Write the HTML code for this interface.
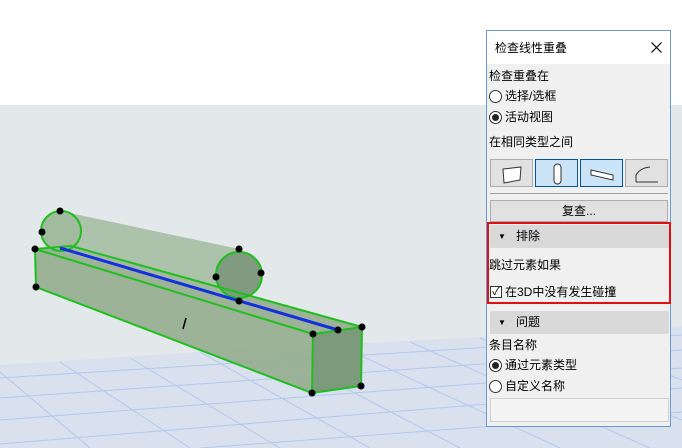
<!DOCTYPE html>
<html><head><meta charset="utf-8"><style>
*{margin:0;padding:0;box-sizing:border-box}
body{width:682px;height:448px;overflow:hidden;position:relative;background:#fff;font-family:"Liberation Sans","Noto Sans CJK SC",sans-serif;font-size:12px;color:#000}
.t{position:absolute;white-space:nowrap;line-height:14px}
.panel{position:absolute;left:486px;top:30px;width:185px;height:397px;background:#f0f0f0;border:1px solid #6b9ad3}
.radio{position:absolute;width:13px;height:13px;border:1px solid #333;border-radius:50%;background:#fff}
.radio.on::after{content:"";position:absolute;left:2px;top:2px;width:7px;height:7px;border-radius:50%;background:#222}
.btn{position:absolute;height:28px;width:43px;border:1px solid #adadad;background:#e1e1e1}
.btn.sel{background:#cce4f7;border-color:#005499}
.hdr{position:absolute;left:3px;width:179px;height:23px;background:#d9d9d9;border-radius:2px}
</style></head><body>
<svg width="682" height="448" style="position:absolute;left:0;top:0">
<rect x="0" y="105" width="682" height="343" fill="#e3e8eb"/>
<polygon points="0,365 200,352 682,326 682,448 0,448" fill="#d9e1ee"/>
<g stroke="#b4c8ee" stroke-width="1" fill="none">
<path d="M0,378 L682,335 M0,398 L682,350 M0,420 L682,368 M0,444 L682,388 M200,448 L682,412"/>
<path d="M0,372 L90,448 M60,362 L190,448 M130,358 L280,448 M200,352 L370,448 M270,349 L460,448 M340,346 L560,448 M410,342 L650,448 M480,338 L682,420 M560,334 L682,380"/>
</g>
<polygon points="35,249 71,246 362,327 361,386 312,393 36,287" fill="#93ad8f" opacity="0.9"/>
<polygon points="313,334 362,327 361,386 312,393" fill="#7e9a7d"/>
<polygon points="60,211 239,249 239,301 61,251" fill="#a2bb9f" opacity="0.85"/>
<circle cx="61" cy="231" r="20" fill="#a2bb9f" stroke="#1fbf1f" stroke-width="2"/>
<circle cx="239" cy="275" r="23" fill="#809b7f" stroke="#1fbf1f" stroke-width="2"/>
<g stroke="#1fbf1f" stroke-width="2" fill="none">
<path d="M35,249 L313,334 L362,327 L71,246 Z M35,249 L36,287 L312,393 L361,386 L362,327 M313,334 L312,393"/>
</g>
<path d="M60,248 L338,330" stroke="#1530e0" stroke-width="3"/>
<g fill="#000">
<circle cx="60" cy="211" r="3.5"/><circle cx="42" cy="232" r="3.5"/><circle cx="35" cy="249" r="3.5"/><circle cx="36" cy="287" r="3.5"/>
<circle cx="239" cy="249" r="3.5"/><circle cx="216" cy="277" r="3.5"/><circle cx="261" cy="273" r="3.5"/><circle cx="239" cy="301" r="3.5"/>
<circle cx="313" cy="334" r="3.5"/><circle cx="338" cy="330" r="3.5"/><circle cx="362" cy="327" r="3.5"/><circle cx="361" cy="386" r="3.5"/><circle cx="312" cy="393" r="3.5"/>
</g>
<path d="M186,318 L183,329" stroke="#000" stroke-width="1.5"/>
</svg>
<div class="panel">
<div style="position:absolute;left:0;top:0;width:183px;height:33px;background:#fff"></div>
<div class="t" style="left:8px;top:10px">检查线性重叠</div>
<svg style="position:absolute;left:164px;top:11px" width="11" height="11"><path d="M0.5,0.5 L10.5,10.5 M10.5,0.5 L0.5,10.5" stroke="#000" stroke-width="1.2"/></svg>
<div class="t" style="left:2px;top:38px">检查重叠在</div>
<div class="radio" style="left:2px;top:59px"></div><div class="t" style="left:18px;top:58px">选择/选框</div>
<div class="radio on" style="left:2px;top:80px"></div><div class="t" style="left:18px;top:79px">活动视图</div>
<div class="t" style="left:2px;top:104px">在相同类型之间</div>
<div class="btn" style="left:3px;top:128px"><svg width="43" height="28"><path d="M12,9 L30,7 L29,20 L13,23 Z" fill="#fff" stroke="#333"/></svg></div>
<div class="btn sel" style="left:48px;top:128px"><svg width="43" height="28"><rect x="18" y="4" width="7" height="20" rx="3.5" fill="#fff" stroke="#333"/></svg></div>
<div class="btn sel" style="left:93px;top:128px"><svg width="43" height="28"><path d="M10,10 L32,15 L32,20 L10,15 Z" fill="#fff" stroke="#333"/></svg></div>
<div class="btn" style="left:138px;top:128px"><svg width="43" height="28"><path d="M10,22 L10,15 Q14,8 24,7 M10,22 L32,22" fill="none" stroke="#333"/></svg></div>
<div style="position:absolute;left:3px;top:162px;width:178px;height:1px;background:#a0a0a0"></div>
<div class="btn" style="left:3px;top:169px;width:178px;height:22px;text-align:center;line-height:20px">复查...</div>
<div style="position:absolute;left:0;top:191px;width:184px;height:82px;border:2px solid #e01010"></div>
<div class="hdr" style="top:194px"><div class="t" style="left:8px;top:5px;font-size:8px">▼</div><div class="t" style="left:26px;top:4px">排除</div></div>
<div class="t" style="left:2px;top:227px">跳过元素如果</div>
<div style="position:absolute;left:3px;top:255px;width:12px;height:12px;border:1px solid #333;background:#fff;font-size:11px;line-height:10px;text-align:center">✓</div>
<div class="t" style="left:18px;top:254px">在3D中没有发生碰撞</div>
<div class="hdr" style="top:280px"><div class="t" style="left:8px;top:5px;font-size:8px">▼</div><div class="t" style="left:26px;top:4px">问题</div></div>
<div class="t" style="left:2px;top:307px">条目名称</div>
<div class="radio on" style="left:2px;top:328px"></div><div class="t" style="left:18px;top:327px">通过元素类型</div>
<div class="radio" style="left:2px;top:349px"></div><div class="t" style="left:18px;top:348px">自定义名称</div>
<div style="position:absolute;left:3px;top:367px;width:179px;height:24px;border:1px solid #d0d0d0;background:#f4f4f4"></div>
</div>
</body></html>
